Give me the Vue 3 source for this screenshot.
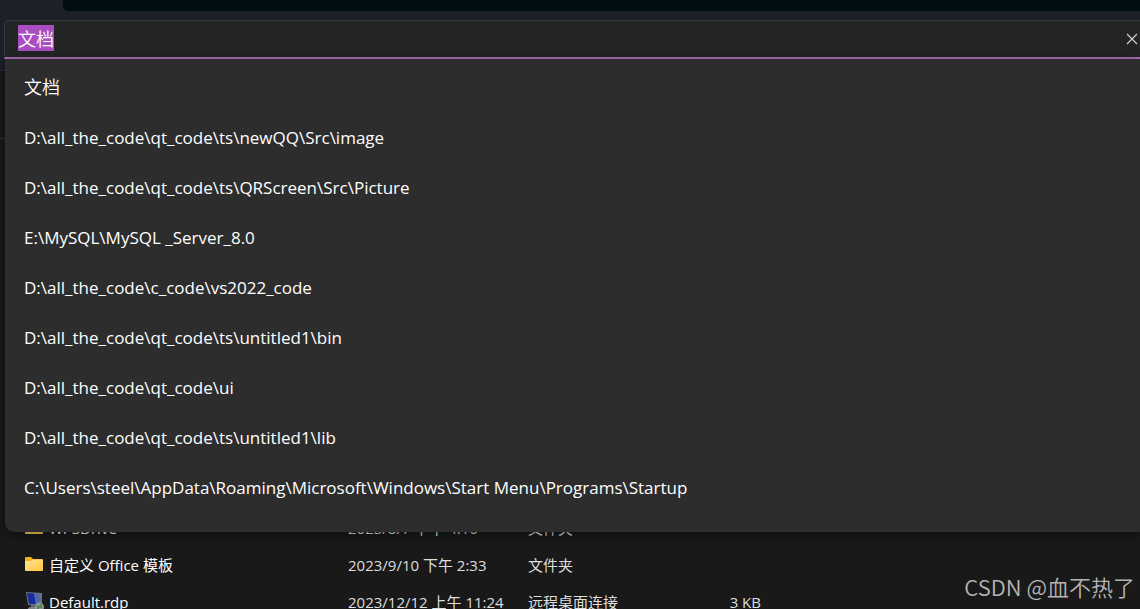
<script setup>
import { onMounted, ref } from 'vue'

const address = ref('文档')
const addressInput = ref(null)

const history = [
  { text: '文档', kind: 'place' },
  { text: 'D:\\all_the_code\\qt_code\\ts\\newQQ\\Src\\image', kind: 'path' },
  { text: 'D:\\all_the_code\\qt_code\\ts\\QRScreen\\Src\\Picture', kind: 'path' },
  { text: 'E:\\MySQL\\MySQL _Server_8.0', kind: 'path' },
  { text: 'D:\\all_the_code\\c_code\\vs2022_code', kind: 'path' },
  { text: 'D:\\all_the_code\\qt_code\\ts\\untitled1\\bin', kind: 'path' },
  { text: 'D:\\all_the_code\\qt_code\\ui', kind: 'path' },
  { text: 'D:\\all_the_code\\qt_code\\ts\\untitled1\\lib', kind: 'path' },
  {
    text: 'C:\\Users\\steel\\AppData\\Roaming\\Microsoft\\Windows\\Start Menu\\Programs\\Startup',
    kind: 'path',
  },
]

const files = [
  { name: 'WPSDrive', icon: 'folder', date: '2023/8/7 下午 4:16', type: '文件夹', size: '' },
  { name: '自定义 Office 模板', icon: 'folder', date: '2023/9/10 下午 2:33', type: '文件夹', size: '' },
  { name: 'Default.rdp', icon: 'rdp', date: '2023/12/12 上午 11:24', type: '远程桌面连接', size: '3 KB' },
]

onMounted(() => {
  addressInput.value.focus()
  addressInput.value.select()
})
</script>

<template>
  <div class="window">
    <header class="chrome">
      <div class="tabs"></div>
      <form class="address" @submit.prevent>
        <input
          ref="addressInput"
          v-model="address"
          class="address-input"
          type="text"
          aria-label="地址"
          autocomplete="off"
          spellcheck="false"
        />
        <button class="clear" type="button" aria-label="清除">
          <svg width="12" height="12" viewBox="0 0 12 12" aria-hidden="true">
            <path d="M1 1 L11 11 M11 1 L1 11" fill="none" stroke="#d0d0d0" stroke-width="1.2" />
          </svg>
        </button>
        <ul class="suggestions">
          <li v-for="item in history" :key="item.text">
            <button type="button" class="suggestion" :class="item.kind" @click="address = item.text">{{ item.text }}</button>
          </li>
        </ul>
      </form>
    </header>
    <div class="toolbar"></div>
    <main class="files">
      <table class="file-table">
        <colgroup>
          <col class="col-name" />
          <col class="col-date" />
          <col class="col-type" />
          <col class="col-size" />
          <col />
        </colgroup>
        <tbody>
          <tr v-for="file in files" :key="file.name">
            <td>
              <span class="file-name">
                <svg v-if="file.icon === 'folder'" width="20" height="20" viewBox="0 0 20 20" aria-hidden="true">
                  <defs>
                    <linearGradient id="folderFront" x1="0" y1="0" x2="1" y2="1">
                      <stop offset="0" stop-color="#ffe596" />
                      <stop offset="1" stop-color="#ffc63b" />
                    </linearGradient>
                  </defs>
                  <path d="M1 3 Q1 2 2 2 H7 L9 4 H18 Q19 4 19 5 V9 H1 Z" fill="#f6ae1c" />
                  <path d="M1 6 H7 L9 4.500 H18 Q19 4.500 19 5.500 V15 Q19 16 18 16 H2 Q1 16 1 15 Z" fill="url(#folderFront)" />
                </svg>
                <svg v-else width="20" height="20" viewBox="0 0 20 20" aria-hidden="true">
                  <path d="M2 0 L18 1 L18 13 L4 13 Z" fill="#6d737d" />
                  <path d="M3 1 L10 1.500 L12 12 L5 12 Z" fill="#182a9a" />
                  <path d="M10 1.500 L16 2 L16.500 12 L12 12 Z" fill="#5166b0" />
                  <path d="M7 13 H12 V16 H7 Z" fill="#626870" />
                  <path d="M4 16 Q8 13 13 16 V18 H4 Z" fill="#7c8188" />
                  <circle cx="15.500" cy="15" r="4.500" fill="#8f9792" />
                  <path d="M13 13.500 L15 15.500 L13 17.500 M18 12 L16 14 L18 16" fill="none" stroke="#3f7c49" stroke-width="1.200" />
                </svg>
                <span>{{ file.name }}</span>
              </span>
            </td>
            <td class="meta">{{ file.date }}</td>
            <td class="meta">{{ file.type }}</td>
            <td class="meta size">{{ file.size }}</td>
            <td></td>
          </tr>
        </tbody>
      </table>
    </main>
    <div class="watermark">CSDN @血不热了</div>
  </div>
</template>

<style>
body {
  margin: 0;
  background: #191919;
}
</style>

<style scoped>
.window {
  position: relative;
  height: 100vh;
  overflow: hidden;
  background: #191919;
  color: #fff;
  font-family: 'Open Sans', 'Noto Sans CJK SC', sans-serif;
}

.chrome {
  box-sizing: border-box;
  height: 71px;
  background: #1b2127;
  border-bottom: 1px solid #32363a;
}

.tabs {
  height: 11px;
  margin-left: 63px;
  background: #020c13;
  border-bottom-left-radius: 5px;
}

.address {
  position: relative;
  box-sizing: border-box;
  display: flex;
  align-items: center;
  height: 39px;
  margin: 9px 0 0 4px;
  background: #222426;
  border: 1px solid #373c42;
  border-right: 0;
  border-bottom: 2px solid #b373bc;
  border-radius: 5px 0 0 0;
}

.address-input {
  flex: 1;
  min-width: 0;
  height: 34px;
  padding: 0 0 2px 13px;
  border: 0;
  outline: 0;
  background: transparent;
  color: #fff;
  font-family: 'Open Sans', 'Noto Sans CJK SC', sans-serif;
  font-size: 18px;
  font-weight: 350;
  line-height: 24px;
}

.address-input::selection {
  background: rgba(171, 78, 195, 0.99);
  color: #fff;
}

.clear {
  display: flex;
  padding: 2px;
  border: 0;
  background: transparent;
}

.suggestions {
  position: absolute;
  z-index: 2;
  top: 100%;
  left: 0;
  right: 0;
  margin: 2px 0 0;
  padding: 3px 0 20px;
  list-style: none;
  background: #2d2d2d;
  border-radius: 0 0 0 9px;
  box-shadow: 0 2px 12px rgba(0, 0, 0, 0.5);
}

.suggestion {
  display: block;
  width: 100%;
  height: 50px;
  padding: 0 19px;
  border: 0;
  background: transparent;
  color: #fff;
  text-align: left;
  white-space: nowrap;
}

.suggestion.place {
  padding-bottom: 2px;
  font-family: 'Noto Sans CJK SC', sans-serif;
  font-size: 18px;
  font-weight: 350;
}

.suggestion.path {
  font-family: 'Open Sans', 'Noto Sans CJK SC', sans-serif;
  font-size: 17px;
}

.toolbar {
  height: 67px;
  border-bottom: 1px solid #323232;
}

.files {
  padding-top: 370px;
}

.file-table {
  width: 100%;
  table-layout: fixed;
  border-collapse: collapse;
  font-size: 15px;
  line-height: 20px;
}

.col-name {
  width: 348px;
}

.col-date {
  width: 180px;
}

.col-type {
  width: 133px;
}

.col-size {
  width: 100px;
}

td {
  height: 37px;
  padding: 0;
  white-space: nowrap;
}

.file-name {
  display: flex;
  align-items: center;
  gap: 5px;
  padding-left: 24px;
}

.meta {
  color: #dedede;
}

.size {
  text-align: right;
}

.watermark {
  position: absolute;
  right: 5px;
  bottom: 7px;
  color: #b4b4b4;
  font-family: 'Noto Sans CJK SC', sans-serif;
  font-size: 22px;
  font-weight: 350;
  line-height: 32px;
}
</style>
